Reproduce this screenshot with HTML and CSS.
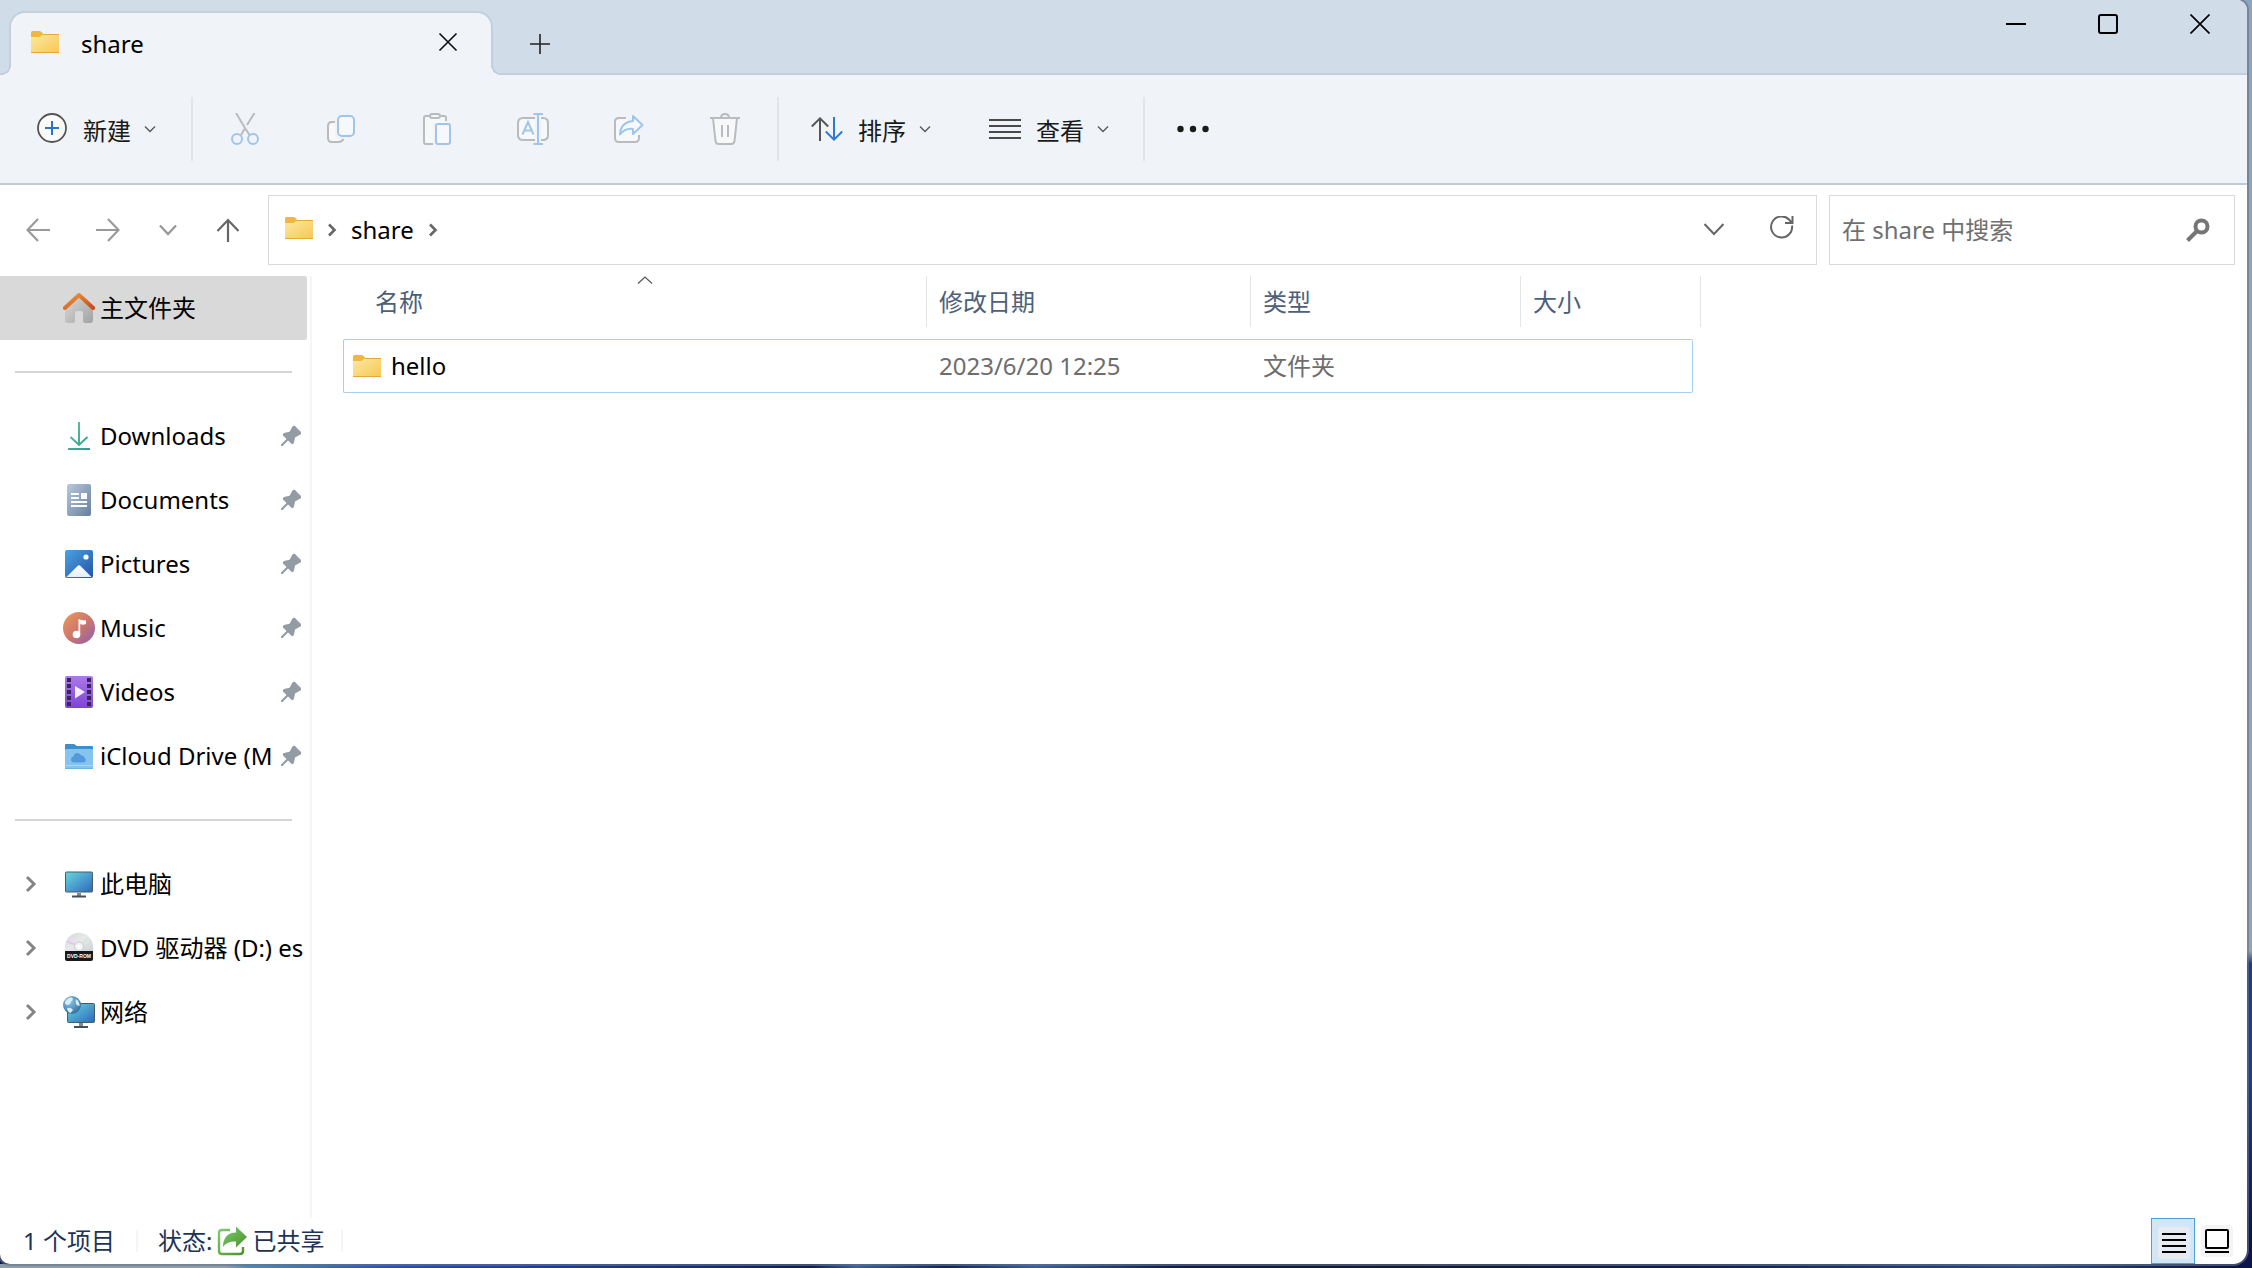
FILE: index.html
```html
<!DOCTYPE html>
<html lang="zh-CN">
<head>
<meta charset="utf-8">
<meta name="viewport" content="width=device-width, initial-scale=1">
<title>share</title>
<link rel="stylesheet" href="styles.css">
</head>
<body>
<svg class="defs" aria-hidden="true">
  <defs>
    <linearGradient id="g-folder" x1="0" y1="0" x2="1" y2="1"><stop offset="0" stop-color="#fde8a6"/><stop offset="1" stop-color="#f6c850"/></linearGradient>
    <linearGradient id="g-roof" x1="0" y1="0" x2="1" y2="1"><stop offset="0" stop-color="#eb9a3a"/><stop offset="1" stop-color="#c8481e"/></linearGradient>
    <linearGradient id="g-wall" x1="0" y1="0" x2="1" y2="1"><stop offset="0" stop-color="#dcdcdc"/><stop offset="1" stop-color="#a2a2a2"/></linearGradient>
    <linearGradient id="g-down" gradientUnits="userSpaceOnUse" x1="5" y1="2" x2="27" y2="30"><stop offset="0" stop-color="#5fca8e"/><stop offset="1" stop-color="#2f9a97"/></linearGradient>
    <linearGradient id="g-doc" x1="0" y1="0" x2="1" y2="1"><stop offset="0" stop-color="#b9c9dc"/><stop offset="1" stop-color="#667f9f"/></linearGradient>
    <linearGradient id="g-pic" x1="0" y1="0" x2="1" y2="1"><stop offset="0" stop-color="#4aa3e2"/><stop offset="1" stop-color="#2453a8"/></linearGradient>
    <linearGradient id="g-hill" x1="0" y1="0" x2="0" y2="1"><stop offset="0" stop-color="#ffffff"/><stop offset="1" stop-color="#e3effa"/></linearGradient>
    <linearGradient id="g-music" x1="0" y1="0" x2="1" y2="1"><stop offset="0" stop-color="#ee9a5a"/><stop offset=".55" stop-color="#c9746f"/><stop offset="1" stop-color="#8a5fb8"/></linearGradient>
    <linearGradient id="g-video" x1="0" y1="0" x2="0" y2="1"><stop offset="0" stop-color="#ab7ae8"/><stop offset="1" stop-color="#7d43d8"/></linearGradient>
    <linearGradient id="g-screen" x1="0" y1="0" x2="1" y2="1"><stop offset="0" stop-color="#6bd6dc"/><stop offset="1" stop-color="#2b69bd"/></linearGradient>
    <linearGradient id="g-disc" x1="0" y1="0" x2="1" y2="1"><stop offset="0" stop-color="#d3d6da"/><stop offset=".5" stop-color="#e9e9ec"/><stop offset="1" stop-color="#c9d0d2"/></linearGradient>
    <radialGradient id="g-globe" cx=".35" cy=".3" r=".8"><stop offset="0" stop-color="#8cc8ea"/><stop offset="1" stop-color="#2a6b9d"/></radialGradient>
    <linearGradient id="g-share" x1="0" y1="0" x2="1" y2="1"><stop offset="0" stop-color="#7ccb6f"/><stop offset="1" stop-color="#4c932c"/></linearGradient>
  </defs>
  <symbol id="folder" viewBox="0 0 32 32">
    <path d="M2 6.500Q2 5 3.500 5H10.500Q12 5 13.200 6.500L14 8V14H2Z" fill="#eeb83f"/>
    <path d="M2 11H9.500Q11 11 12.500 9.500L14 8H30V27H2Z" fill="url(#g-folder)"/>
    <path d="M2 26.500H30M13.500 8.500H30" stroke="#e2a93d" fill="none"/>
  </symbol>
  <symbol id="pin" viewBox="0 0 22 22">
    <path d="M12.500 1.500Q14 0 15.500 1.500L20.500 6.500Q22 8 20.500 9.500L15 12.500L13.800 18Q13 20 11.500 18.800L8 15.500L2.500 21H1V19.500L6.500 14L3 10.500Q2 9 4 8L9.500 6.800Z" fill="#949ca3"/>
  </symbol>
  <symbol id="chevron-down" viewBox="0 0 12 12"><path d="M1 3.500L6 8.500L11 3.500" fill="none" stroke="#555" stroke-width="1.300"/></symbol>
  <symbol id="expand" viewBox="0 0 12 18"><path d="M2 2L9 9L2 16" fill="none" stroke="#868686" stroke-width="3"/></symbol>
  <symbol id="crumb" viewBox="0 0 12 16"><path d="M3 2.500L8.500 8L3 13.500" fill="none" stroke="#666" stroke-width="2.600"/></symbol>
</svg>

<div class="window">
  <header class="titlebar">
    <div class="tab">
      <svg class="icon"><use href="#folder"/></svg>
      <span class="tab-title">share</span>
      <button class="tab-close" aria-label="关闭标签页"><svg width="20" height="20"><path d="M1.500 1.500L18.500 18.500M18.500 1.500L1.500 18.500" stroke="#111" stroke-width="1.700"/></svg></button>
    </div>
    <button class="tab-add" aria-label="新标签页"><svg width="20" height="20"><path d="M10 0V20M0 10H20" stroke="#222" stroke-width="1.600"/></svg></button>
    <div class="captions">
      <button aria-label="最小化"><svg width="20" height="20"><path d="M0 10H20" stroke="#000" stroke-width="2"/></svg></button>
      <button aria-label="最大化"><svg width="20" height="20"><rect x="1" y="1" width="18" height="18" rx="2" fill="none" stroke="#000" stroke-width="2"/></svg></button>
      <button aria-label="关闭"><svg width="20" height="20"><path d="M.5 .5L19.500 19.500M19.500 .5L.5 19.500" stroke="#000" stroke-width="1.700"/></svg></button>
    </div>
  </header>

  <div class="toolbar">
    <button class="tool tool-new">
      <svg class="icon" viewBox="0 0 32 32"><circle cx="16" cy="15" r="14" fill="#fafafa" stroke="#555" stroke-width="1.800"/><path d="M16 8V22M9 15H23" stroke="#2b73ce" stroke-width="2"/></svg>
      <span>新建</span><svg class="caret"><use href="#chevron-down"/></svg>
    </button>
    <span class="divider"></span>
    <button class="tool tool-icon" aria-label="剪切" disabled><svg class="icon" viewBox="0 0 32 32" fill="none" stroke-width="2"><path d="M7 0L16 15L20.500 22M25.500 0L18 12M15.500 16L12 22" stroke="#b9bbbe"/><circle cx="8" cy="26" r="5" stroke="#9fc6ea"/><circle cx="24" cy="26" r="5" stroke="#9fc6ea"/></svg></button>
    <button class="tool tool-icon" aria-label="复制" disabled><svg class="icon" viewBox="0 0 32 32" fill="none" stroke-width="2"><path d="M10 9H7Q3 9 3 13V25Q3 29 7 29H13Q17 29 18.500 26H14Q10 26 10 21Z" fill="#f8f8fa"/><path d="M10 9H7Q3 9 3 13V25Q3 29 7 29H13Q17 29 18.500 26" stroke="#b9bbbe"/><rect x="13" y="3" width="16" height="20" rx="4" fill="#f6f8fb" stroke="#9fc6ea"/></svg></button>
    <button class="tool tool-icon" aria-label="粘贴" disabled><svg class="icon" viewBox="0 0 32 32" fill="none" stroke-width="2"><path d="M8 3H5Q3 3 3 5V29Q3 31 5 31H12V10H25V5Q25 3 23 3Z" fill="#f7f8fa"/><path d="M8 3H5Q3 3 3 5V29Q3 31 5 31H12M20 3H23Q25 3 25 5V8" stroke="#b9bbbe"/><rect x="9" y="1" width="10" height="4" rx="2" stroke="#b9bbbe"/><rect x="15" y="11" width="14" height="20" rx="2" fill="#f6f8fb" stroke="#9fc6ea"/></svg></button>
    <button class="tool tool-icon" aria-label="重命名" disabled><svg class="icon" viewBox="0 0 32 32" fill="none" stroke-width="2"><path d="M18 5H6Q1 5 1 10V22Q1 27 6 27H18M24 5H26Q31 5 31 10V22Q31 27 26 27H24" fill="#f7f8fa" stroke="#b9bbbe"/><path d="M5.500 21.500L11 9L16.500 21.500M7.500 17.500H14.500M16.500 1H26M16.500 31H26M21 1V31" stroke="#9fc6ea"/></svg></button>
    <button class="tool tool-icon" aria-label="共享" disabled><svg class="icon" viewBox="0 0 32 32" fill="none" stroke-width="2"><path d="M13 5H6Q2 5 2 9V25Q2 29 6 29H22Q26 29 26 25V22" fill="#f7f8fa" stroke="#b9bbbe"/><path d="M20 3L29.500 12L20 21V16Q12 15 7 21.500Q7.500 9.500 20 8Z" fill="#f6f8fb" stroke="#9fc6ea" stroke-linejoin="round"/></svg></button>
    <button class="tool tool-icon" aria-label="删除" disabled><svg class="icon" viewBox="0 0 32 32" fill="none" stroke="#b9bbbe" stroke-width="2"><path d="M4 5L6.500 28Q7 31 10 31H22Q25 31 25.500 28L28 5Z" fill="#f7f8fa"/><path d="M1 5H31M12 5Q12 1 16 1Q20 1 20 5M13 12V24M19 12V24"/></svg></button>
    <span class="divider"></span>
    <button class="tool">
      <svg class="icon" viewBox="0 0 32 32" fill="none" stroke-width="2"><path d="M9 28V5M.8 13.500L9 5.300L17.200 13.500" stroke="#555"/><path d="M23 4V27M14.800 18.500L23 26.700L31.200 18.500" stroke="#2b7bd6"/></svg>
      <span>排序</span><svg class="caret"><use href="#chevron-down"/></svg>
    </button>
    <button class="tool">
      <svg class="icon" viewBox="0 0 32 32"><path d="M0 7H32M0 13H32M0 19H32M0 25H32" stroke="#4a4a4a" stroke-width="2"/></svg>
      <span>查看</span><svg class="caret"><use href="#chevron-down"/></svg>
    </button>
    <span class="divider"></span>
    <button class="tool" aria-label="更多"><svg class="icon" viewBox="0 0 32 32" fill="#1a1a1a"><circle cx="3.500" cy="16" r="3.200"/><circle cx="16" cy="16" r="3.200"/><circle cx="28.500" cy="16" r="3.200"/></svg></button>
  </div>

  <div class="navbar">
    <nav class="history" aria-label="导航">
      <button class="wide" aria-label="后退"><svg width="24" height="24" fill="none" stroke="#9a9a9a" stroke-width="2.200"><path d="M24 12H1.500M12 1L1.500 12L12 23"/></svg></button>
      <button aria-label="前进"><svg width="24" height="24" fill="none" stroke="#9a9a9a" stroke-width="2.200"><path d="M0 12H22.500M12 1L22.500 12L12 23"/></svg></button>
      <button class="narrow" aria-label="最近浏览的位置"><svg width="24" height="24" fill="none" stroke="#9a9a9a" stroke-width="2.400"><path d="M4 7.500L12 16L20 7.500"/></svg></button>
      <button aria-label="上移"><svg width="24" height="24" fill="none" stroke="#666" stroke-width="2.200"><path d="M12 24V2M1.500 13L12 2L22.500 13"/></svg></button>
    </nav>
    <div class="address">
      <svg class="icon"><use href="#folder"/></svg>
      <svg class="crumb"><use href="#crumb"/></svg>
      <a class="crumb-link" href="#share">share</a>
      <svg class="crumb"><use href="#crumb"/></svg>
      <button class="push" aria-label="以前的位置"><svg width="24" height="24" fill="none" stroke="#666" stroke-width="2"><path d="M2.500 6L12 16L21.500 6"/></svg></button>
      <button class="refresh" aria-label="刷新"><svg width="24" height="24" fill="none" stroke="#666" stroke-width="2"><path d="M22 9.500A10.500 10.500 0 1 1 19 3.500L22 7M22.500 0V7H15"/></svg></button>
    </div>
    <form class="search">
      <input type="search" aria-label="在 share 中搜索" placeholder="在 share 中搜索">
      <button type="button" aria-label="搜索"><svg width="24" height="24" fill="none" stroke="#757575"><circle cx="15.500" cy="8.500" r="6" stroke-width="4"/><path d="M11 13L1.500 22.500" stroke-width="4"/></svg></button>
    </form>
  </div>

  <div class="content">
    <nav class="sidebar" aria-label="导航窗格">
      <a class="place selected" href="#home"><svg class="icon" viewBox="0 0 32 32"><path d="M2 14L16 2L30 14V28Q30 31 27 31H22Q20 31 20 29V21Q20 19 18 19H14Q12 19 12 21V29Q12 31 10 31H5Q2 31 2 28Z" fill="url(#g-wall)"/><path d="M1.800 16L16 3L30.200 16" fill="none" stroke="url(#g-roof)" stroke-width="4" stroke-linejoin="round" stroke-linecap="round"/></svg><span class="place-name">主文件夹</span></a>
      <hr>
      <a class="place" href="#downloads"><svg class="icon" viewBox="0 0 32 32" fill="none" stroke="url(#g-down)" stroke-width="2"><path d="M16 2L16.010 25M7.500 17L16 25L24.500 17M5 29L27 29.010"/></svg><span class="place-name">Downloads</span><svg class="pin"><use href="#pin"/></svg></a>
      <a class="place" href="#documents"><svg class="icon" viewBox="0 0 32 32"><rect x="4" width="24" height="32" rx="2" fill="url(#g-doc)"/><path d="M8 10H16M8 14H16M8 18H24M8 22H24" stroke="#fff" stroke-width="2"/><rect x="18" y="9" width="6" height="6" fill="#fff"/></svg><span class="place-name">Documents</span><svg class="pin"><use href="#pin"/></svg></a>
      <a class="place" href="#pictures"><svg class="icon" viewBox="0 0 32 32"><rect x="2" y="2" width="28" height="28" rx="2" fill="url(#g-pic)"/><path d="M3.500 29L14.500 18Q16 16.500 17.500 18L28.500 29Z" fill="url(#g-hill)"/><circle cx="23" cy="9" r="2.600" fill="#fff"/></svg><span class="place-name">Pictures</span><svg class="pin"><use href="#pin"/></svg></a>
      <a class="place" href="#music"><svg class="icon" viewBox="0 0 32 32"><circle cx="16" cy="16" r="16" fill="url(#g-music)"/><circle cx="13.500" cy="22.500" r="3.800" fill="#fff"/><path d="M15.500 22.500V7Q19 8.500 23 8.500V12Q20 13.500 17.200 12V22.500Z" fill="#fff"/></svg><span class="place-name">Music</span><svg class="pin"><use href="#pin"/></svg></a>
      <a class="place" href="#videos"><svg class="icon" viewBox="0 0 32 32"><rect x="2" width="28" height="32" rx="2" fill="url(#g-video)"/><path d="M6 2V32M26 2V32" stroke="#3c2459" stroke-width="4" stroke-dasharray="4 2"/><path d="M12 10L22 16L12 22.500Z" fill="#f3eefb"/></svg><span class="place-name">Videos</span><svg class="pin"><use href="#pin"/></svg></a>
      <a class="place" href="#icloud"><svg class="icon" viewBox="0 0 32 32"><path d="M2 4.500Q2 4 3 4H11L14 6H29Q30 6 30 7V12H2Z" fill="#3f8ec8"/><rect x="2" y="9" width="28" height="20" rx="1" fill="#84c5f0"/><path d="M2 25.500H30" stroke="#a6d7f4"/><path d="M2 28.500H30" stroke="#6fb4dd"/><path d="M11.500 22.500Q8 22.500 8 19.500Q8 17 10.500 16.500Q11 13 14.500 13Q17 13 18.500 15.500Q21.500 15.500 21.500 18Q23 18.500 22.500 21Q22 22.500 20 22.500Z" fill="#5499db"/></svg><span class="place-name">iCloud Drive (M</span><svg class="pin"><use href="#pin"/></svg></a>
      <hr>
      <a class="place" href="#pc"><svg class="expand"><use href="#expand"/></svg><svg class="icon" viewBox="0 0 32 32"><rect x="2.500" y="4" width="27" height="20" rx="1" fill="url(#g-screen)" stroke="#4b5a68"/><path d="M14 25H18V28H14Z" fill="#7d8b98"/><path d="M9 28.500H23" stroke="#454f5a" stroke-width="2"/></svg><span class="place-name">此电脑</span></a>
      <a class="place" href="#dvd"><svg class="expand"><use href="#expand"/></svg><svg class="icon" viewBox="0 0 32 32"><path d="M2 20V14.500A14 13.800 0 0 1 30 14.500V20Z" fill="url(#g-disc)"/><path d="M16 14L4 9.500" stroke="#e9c7e6" stroke-width="2"/><path d="M16 14L25 5.500" stroke="#cfe9d2" stroke-width="2"/><circle cx="16" cy="14.500" r="4.500" fill="#f3f4f5" stroke="#c4cacd"/><circle cx="16" cy="14.500" r="1.500" fill="#fff"/><path d="M2 19H30V27Q30 29 28 29H4Q2 29 2 27Z" fill="#17181a"/><text x="16" y="26" class="disc-label">DVD-ROM</text></svg><span class="place-name">DVD 驱动器 (D:) es</span></a>
      <a class="place" href="#network"><svg class="expand"><use href="#expand"/></svg><svg class="icon" viewBox="0 0 32 32"><rect x="4.500" y="7.500" width="27" height="19" rx="1" fill="url(#g-screen)" stroke="#4b5a68"/><path d="M16 27H20V30H16Z" fill="#7d8b98"/><path d="M11 31H25" stroke="#454f5a" stroke-width="2"/><circle cx="9" cy="9" r="9" fill="url(#g-globe)"/><path d="M2 6Q5 1 9 1.500Q11 4 8 5.500Q8 8 4.500 9Q2 9 2 6ZM4 12Q8 11 10 14L7.500 17Q4.500 16 4 12ZM13 3Q17 6 16.500 10L13.500 9Q12 6 13 3Z" fill="#d9ecf6"/></svg><span class="place-name">网络</span></a>
    </nav>

    <main class="files">
      <table>
        <colgroup><col class="c-name"><col class="c-date"><col class="c-type"><col class="c-size"><col class="c-end"></colgroup>
        <thead>
          <tr>
            <th class="first" aria-sort="ascending"><div class="head"><svg class="sorted" viewBox="0 0 16 8"><path d="M1 7.500L8 1L15 7.500" fill="none" stroke="#555" stroke-width="1.200"/></svg>名称</div></th>
            <th><div class="head">修改日期</div></th>
            <th><div class="head">类型</div></th>
            <th colspan="2"><div class="head">大小</div></th>
          </tr>
        </thead>
        <tbody>
          <tr>
            <td><a class="file" href="#hello"><svg class="icon"><use href="#folder"/></svg>hello</a></td>
            <td>2023/6/20 12:25</td>
            <td>文件夹</td>
            <td></td>
          </tr>
        </tbody>
      </table>
    </main>
  </div>

  <footer class="status">
    <span class="status-item">1 个项目</span>
    <span class="status-item">状态:<svg class="icon" viewBox="0 0 32 32"><path d="M14 5H6Q3 5 3 8V26Q3 29 6 29H24Q27 29 27 26V22" fill="none" stroke="url(#g-share)" stroke-width="2.400"/><path d="M20 1.500L31 12L20 22.500V16.500Q11 16 7 22Q7 8 20 7.500Z" fill="url(#g-share)"/></svg>已共享</span>
    <div class="views">
      <button class="view active" aria-label="详细信息" aria-pressed="true"><svg class="icon" viewBox="0 0 32 32"><rect width="32" height="32" rx="4" fill="#e5ebf1"/><path d="M4 7H28M4 13H28M4 19H28M4 25H28" stroke="#000" stroke-width="2"/></svg></button>
      <button class="view" aria-label="大缩略图" aria-pressed="false"><svg class="icon" viewBox="0 0 32 32"><rect width="32" height="32" rx="4" fill="#f4f4f4"/><rect x="5" y="5" width="22" height="18" rx="1" fill="#fff" stroke="#000" stroke-width="2"/><path d="M4 27H28" stroke="#000" stroke-width="2"/></svg></button>
    </div>
  </footer>
</div>
</body>
</html>
```
FILE: styles.css
```css
* { box-sizing: border-box; }

body {
  margin: 0;
  min-height: 100vh;
  padding: 0 5px 4px 0;
  display: flex;
  font: 24px/32px "Noto Sans", "Noto Sans CJK SC", sans-serif;
  color: #000;
  background:
    linear-gradient(90deg, #8d9db0 0 10%, #3f8fc4 11%, #1c50b8 18%, #0d2a86 32%, #0b1d5c 36%, #2f62ae 38%, #0d2468 42%, #2d62b0 46%, #0c1c58 52%, #101a3c 62%, #0b1c5c 75%, #214a96 90%, #0a1550 99%) bottom / 100% 4px no-repeat,
    linear-gradient(180deg, #8aa5c2 0, #8fa5b8 75%, #1b3a94 76%, #1a3c98 85%, #0a1550 98%);
}

button {
  display: flex;
  align-items: center;
  justify-content: center;
  padding: 0;
  border: 0;
  background: none;
  font: inherit;
  color: inherit;
}

a { color: inherit; text-decoration: none; }
svg { display: block; flex: none; }
.defs { position: absolute; width: 0; height: 0; }
.icon { width: 32px; height: 32px; }

.window {
  flex: 1;
  min-width: 0;
  display: flex;
  flex-direction: column;
  overflow: hidden;
  background: #fff;
  border-radius: 0 10px 14px 10px;
  box-shadow: 0 0 0 2px rgba(105, 115, 130, .6);
}

/* title bar and tabs */
.titlebar {
  display: flex;
  height: 75px;
  padding-left: 9px;
  background: #d0dde9;
  box-shadow: inset 0 -2px #c2d0dd;
}

.tab {
  position: relative;
  display: flex;
  align-items: center;
  width: 484px;
  margin-top: 11px;
  padding: 0 33px 4px 18px;
  background: #f0f4f9;
  border: 2px solid #c2d0dd;
  border-bottom: 0;
  border-radius: 16px 16px 0 0;
}

.tab::before,
.tab::after {
  content: "";
  position: absolute;
  bottom: 0;
  width: 10px;
  height: 10px;
}
.tab::before {
  left: -10px;
  background: radial-gradient(circle at 0 0, #d0dde9 8px, #c2d0dd 8px 10px, #f0f4f9 10px);
}
.tab::after {
  right: -10px;
  background: radial-gradient(circle at 100% 0, #d0dde9 8px, #c2d0dd 8px 10px, #f0f4f9 10px);
}

.tab-title { flex: 1; padding: 4px 0 0 20px; }
.tab-add { width: 94px; padding-top: 13px; }
.captions { display: flex; margin-left: auto; height: 48px; padding-right: 1px; }
.captions button { width: 92px; }

/* command bar */
.toolbar {
  display: flex;
  align-items: center;
  gap: 2px;
  height: 110px;
  padding-left: 9px;
  background: #f0f4f9;
  border-bottom: 2px solid #bccbd9;
}
.tool { height: 64px; padding: 0 28px; color: #1a1a1a; }
.tool-new { padding: 0 29px 0 27px; }
.tool-icon { width: 94px; padding: 0 28px 0 30px; }
.tool span { padding: 4px 13px 0 15px; }
.caret { width: 12px; height: 12px; }
.divider { width: 2px; height: 64px; margin: 0 2px 0 4px; background: #e1e5ea; }

/* address row */
.navbar { display: flex; padding: 10px 12px 11px 0; }
.history { display: flex; padding-right: 8px; }
.history button { width: 64px; }
.history .narrow { width: 56px; }
.history .wide { width: 76px; }
.address,
.search {
  display: flex;
  align-items: center;
  height: 70px;
  border: 1px solid #d9d9d9;
}
.address { flex: 1; min-width: 0; padding-left: 14px; }
.address .icon,
.refresh svg { margin-bottom: 4px; }
.address button { width: 68px; height: 68px; }
.address .push { margin-left: auto; }
.crumb { width: 12px; height: 16px; margin-left: 11px; }
.crumb-link { margin-left: 13px; }
.crumb-link + .crumb { margin-left: 13px; }
.search { flex: 0 1 406px; min-width: 0; margin-left: 12px; }
.search input {
  flex: 1;
  min-width: 0;
  padding: 0 0 0 12px;
  border: 0;
  outline: 0;
  background: none;
  font: inherit;
}
.search input::placeholder { color: #707070; opacity: 1; }
.search button { width: 72px; height: 68px; }

/* navigation pane */
.content { flex: 1; display: flex; }
.sidebar { width: 312px; padding-right: 3px; border-right: 2px solid #f5f5f5; }
.place {
  display: flex;
  align-items: center;
  height: 64px;
  padding-left: 63px;
}
.selected { background: #d9d9d9; border-radius: 0 2px 2px 0; }
.place-name {
  flex: 1;
  min-width: 0;
  margin-left: 5px;
  overflow: hidden;
  white-space: nowrap;
}
.pin { width: 22px; height: 22px; margin: 0 5px 0 4px; }
.expand { width: 12px; height: 18px; margin: 0 26px 0 -38px; }
.disc-label {
  font: bold 5px "Liberation Sans", sans-serif;
  text-anchor: middle;
  fill: #fff;
}
.sidebar hr {
  height: 2px;
  margin: 31px 15px;
  border: 0;
  background: #d5d5d5;
}

/* file list */
.files { flex: 1; min-width: 0; padding-left: 31px; }
table { table-layout: fixed; width: 1358px; border-collapse: separate; border-spacing: 0; }
.c-name { width: 584px; }
.c-date { width: 324px; }
.c-type { width: 270px; }
.c-size { width: 172px; }
.c-end { width: 8px; }
th { padding: 0 0 12px; font-weight: 400; text-align: left; color: #4c607a; }
.head {
  position: relative;
  height: 51px;
  padding: 10px 0 0 12px;
  border-right: 1px solid #e5e5e5;
}
th.first { padding-left: 20px; }
.sorted { position: absolute; top: 0; left: 50%; width: 16px; height: 8px; margin-left: -8px; }
td {
  height: 54px;
  padding: 0 0 0 12px;
  border: solid #a5d0f5;
  border-width: 1px 0;
  color: #6d6d6d;
}
td:first-child { padding-left: 7px; border-left-width: 1px; border-radius: 2px 0 0 2px; }
td:last-child { border-right-width: 1px; border-radius: 0 2px 2px 0; }
.file { display: flex; align-items: center; gap: 8px; color: #000; }

/* status bar */
.status { display: flex; height: 46px; color: #1e3354; }
.status-item {
  display: flex;
  align-items: center;
  height: 22px;
  margin-top: 12px;
  padding: 0 17px 0 20px;
  border-right: 2px solid #f5f5f5;
}
.status-item:first-child { padding-left: 23px; padding-right: 21px; }
.status .status-item .icon { margin: 0 4px; }
.views { display: flex; margin-left: auto; padding-right: 8px; }
.view { width: 44px; border: 1px solid transparent; }
.active { padding-left: 2px; background: #d2e6f5; border-color: #4ca0dc; }
.active .icon { margin-top: 4px; }
```
